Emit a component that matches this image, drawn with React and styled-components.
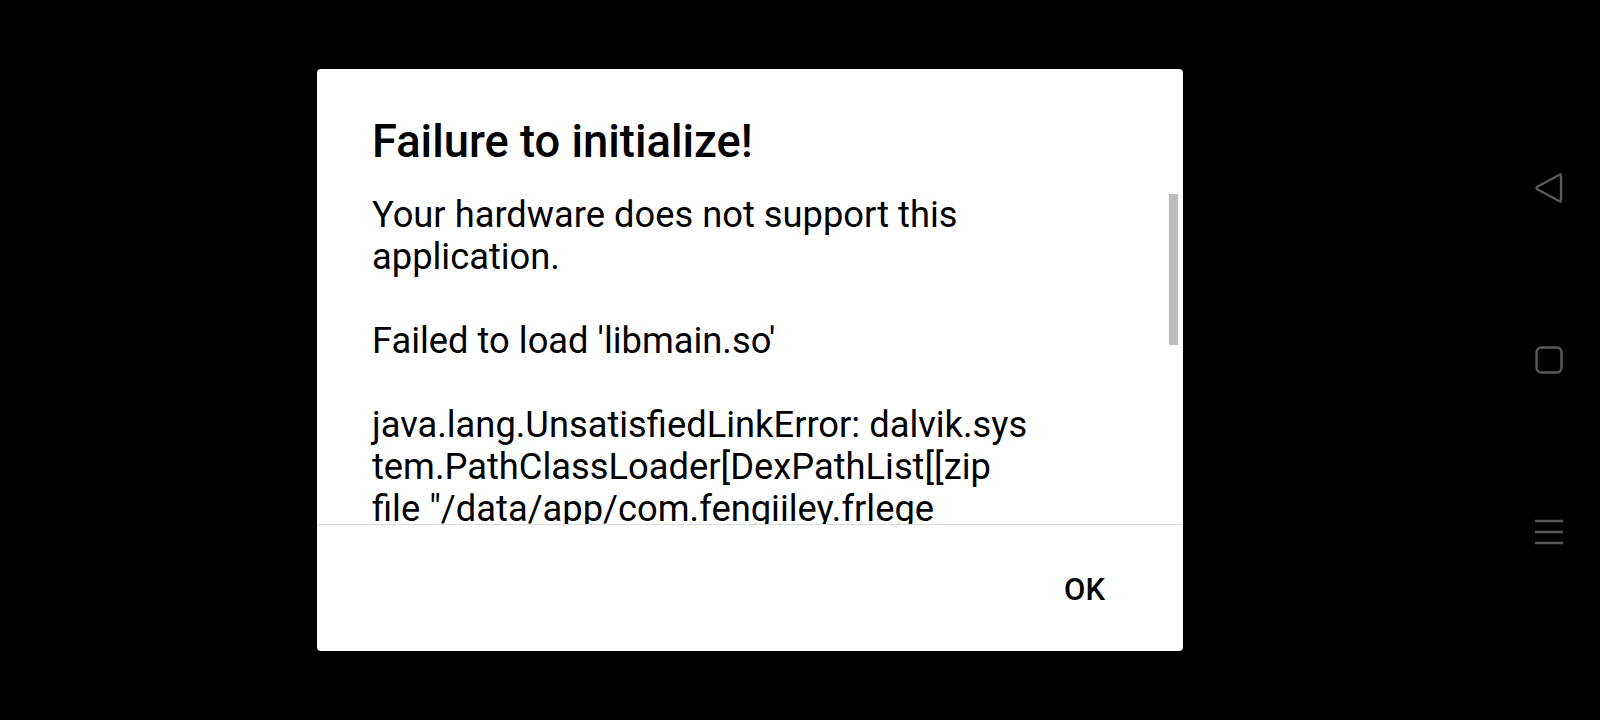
import React from "react";
import styled, { createGlobalStyle } from "styled-components";

const Global = createGlobalStyle`
  html, body { margin: 0; padding: 0; background: #000; }
  body { font-family: Roboto, "Noto Sans", "Liberation Sans", sans-serif; }
`;

const Screen = styled.div`
  display: flex;
  width: 1600px;
  height: 720px;
  background: #000;
  overflow: hidden;
`;

const Stage = styled.div`
  flex: 1;
  display: flex;
  align-items: center;
  justify-content: center;
`;

const Dialog = styled.div`
  width: 866px;
  height: 582px;
  background: #fff;
  border-radius: 4px;
  display: flex;
  flex-direction: column;
  overflow: hidden;
`;

const Title = styled.h1`
  margin: 0;
  padding: 47px 55px 0 55px;
  font-family: Roboto, sans-serif;
  font-weight: 500;
  font-size: 45.3px;
  line-height: 52px;
  color: #000;
`;

const ScrollArea = styled.div`
  position: relative;
  margin-top: 25px;
  flex: 1;
  overflow: hidden;
  border-bottom: 1px solid #dcdcdc;
`;

const Message = styled.div`
  padding: 1px 55px 0 55px;
  font-family: Roboto, sans-serif;
  font-size: 36.3px;
  line-height: 42px;
  color: #000;
  white-space: pre;
`;

const Thumb = styled.div`
  position: absolute;
  top: 1px;
  right: 5px;
  width: 9px;
  height: 151px;
  background: #bdbdbd;
`;

const Footer = styled.div`
  height: 126px;
  display: flex;
  align-items: center;
  justify-content: flex-end;
  padding: 4px 78px 0 0;
  box-sizing: border-box;
`;

const OkButton = styled.button`
  border: none;
  background: transparent;
  padding: 0;
  font-family: Roboto, sans-serif;
  font-weight: 500;
  font-size: 31px;
  line-height: 36px;
  color: #000;
  cursor: pointer;
`;

const NavBar = styled.div`
  width: 100px;
  display: flex;
  flex-direction: column;
  align-items: center;
  justify-content: center;
  gap: 142px;
  padding-right: 2px;
  box-sizing: border-box;
`;

const NavIcon = styled.svg`
  width: 30px;
  height: 30px;
  display: block;
`;

const lines = [
  "Your hardware does not support this",
  "application.",
  "",
  "Failed to load 'libmain.so'",
  "",
  "java.lang.UnsatisfiedLinkError: dalvik.sys",
  "tem.PathClassLoader[DexPathList[[zip",
  "file \"/data/app/com.fengiiley.frlege",
  "nd-1/base.apk\"],nativeLibraryDirec",
  "tories=[/data/app/com.fengiiley.frle",
  "gend-1/lib/arm, /system/lib]]]",
];

export default function App() {
  return (
    <>
      <Global />
      <Screen>
        <Stage>
          <Dialog>
            <Title>Failure to initialize!</Title>
            <ScrollArea>
              <Message>{lines.join("\n")}</Message>
              <Thumb />
            </ScrollArea>
            <Footer>
              <OkButton>OK</OkButton>
            </Footer>
          </Dialog>
        </Stage>
        <NavBar>
          <NavIcon viewBox="0 0 30 30" fill="none" stroke="#5a5a5a" strokeWidth="2.4" strokeLinejoin="round">
            <path d="M27 2.5 L27 27.5 Q27 29 25.6 28.2 L3.2 16.2 Q2 15 3.2 13.8 L25.6 1.8 Q27 1 27 2.5 Z" />
          </NavIcon>
          <NavIcon viewBox="0 0 30 30" fill="none" stroke="#5a5a5a" strokeWidth="2.4">
            <rect x="2.5" y="2.5" width="25" height="25" rx="5" />
          </NavIcon>
          <NavIcon viewBox="0 0 30 30" fill="none" stroke="#5a5a5a" strokeWidth="2.4">
            <path d="M1 4 H29 M1 15 H29 M1 26 H29" />
          </NavIcon>
        </NavBar>
      </Screen>
    </>
  );
}
